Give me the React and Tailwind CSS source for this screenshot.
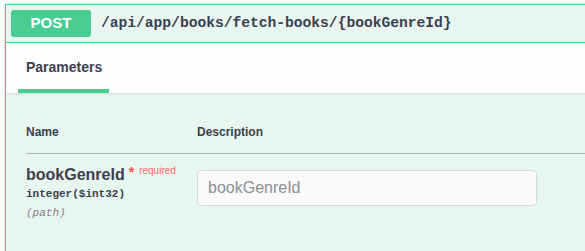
import React from "react";

const App = () => {
  return (
    <div className="w-[585px] h-[251px] overflow-hidden bg-white font-['Liberation_Sans',Arial,sans-serif] text-[#3b4151]">
      <div className="ml-[5px] mt-[4px] w-[640px] h-[300px] border border-[#49cc90] bg-[#e8f6f0] shadow-[0_0_3px_rgba(0,0,0,0.19)]">
        {/* Summary bar */}
        <div className="flex items-center gap-[10px] p-[5px] border-b border-[#49cc90]">
          <span className="flex h-[27px] w-[80px] items-center justify-center rounded-[3px] bg-[#49cc90] text-[15px] font-bold text-white">
            POST
          </span>
          <span className="font-['Liberation_Mono',monospace] text-[14.7px] font-bold tracking-[-0.05px]">
            /api/app/books/fetch-books/{"{bookGenreId}"}
          </span>
        </div>

        {/* Tab header */}
        <div className="flex h-[50px] items-end bg-[#fcfdfd] pl-[12px] shadow-[0_1px_2px_rgba(0,0,0,0.1)]">
          <div className="flex h-[47px] w-[91px] items-center border-b-4 border-[#49cc90] pl-[8px] text-[14px] font-bold">
            Parameters
          </div>
        </div>

        {/* Parameters table */}
        <div className="pl-[20px] pt-[30px]">
          <div className="flex border-b border-[#a9b5b1] pb-[12px] text-[12px] font-bold">
            <div className="w-[171px]">Name</div>
            <div>Description</div>
          </div>
          <div className="flex pt-[11px]">
            <div className="w-[171px]">
              <div className="flex items-start">
                <span className="text-[16px] font-bold leading-[20px]">bookGenreId</span>
                <span className="ml-[4px] text-[14px] leading-[14px] text-[#ff0000]/70 font-bold">*</span>
                <span className="ml-[5px] text-[10px] leading-[12px] text-[#ff0000]/60">required</span>
              </div>
              <div className="mt-[1px] font-['Liberation_Mono',monospace] text-[11px] font-bold leading-[16px]">
                integer($int32)
              </div>
              <div className="mt-[3px] font-['Liberation_Mono',monospace] text-[11px] italic leading-[16px] text-[#808080]">
                (path)
              </div>
            </div>
            <div className="pt-[5px]">
              <input
                type="text"
                placeholder="bookGenreId"
                className="h-[36px] w-[340px] rounded-[4px] border border-[#d9d9d9] bg-[#fafafa] px-[10px] text-[16px] placeholder:text-[#8a8f98] outline-none"
              />
            </div>
          </div>
        </div>
      </div>
    </div>
  );
};

export default App;
